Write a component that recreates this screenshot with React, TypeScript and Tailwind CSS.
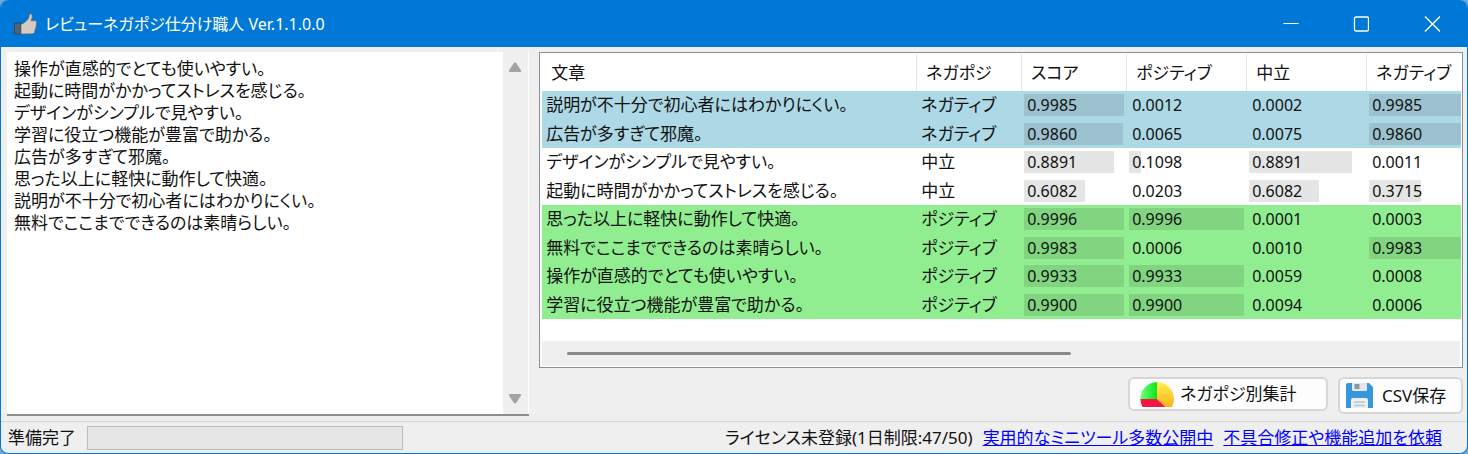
import { useState } from "react";

type Label = "ネガティブ" | "中立" | "ポジティブ";

interface Review {
    text: string;
    label: Label;
    scores: string[]; // score, positive, neutral, negative
}

const SOURCE = [
    "操作が直感的でとても使いやすい。",
    "起動に時間がかかってストレスを感じる。",
    "デザインがシンプルで見やすい。",
    "学習に役立つ機能が豊富で助かる。",
    "広告が多すぎて邪魔。",
    "思った以上に軽快に動作して快適。",
    "説明が不十分で初心者にはわかりにくい。",
    "無料でここまでできるのは素晴らしい。",
].join("\n");

const REVIEWS: Review[] = [
    { text: "説明が不十分で初心者にはわかりにくい。", label: "ネガティブ", scores: ["0.9985", "0.0012", "0.0002", "0.9985"] },
    { text: "広告が多すぎて邪魔。", label: "ネガティブ", scores: ["0.9860", "0.0065", "0.0075", "0.9860"] },
    { text: "デザインがシンプルで見やすい。", label: "中立", scores: ["0.8891", "0.1098", "0.8891", "0.0011"] },
    { text: "起動に時間がかかってストレスを感じる。", label: "中立", scores: ["0.6082", "0.0203", "0.6082", "0.3715"] },
    { text: "思った以上に軽快に動作して快適。", label: "ポジティブ", scores: ["0.9996", "0.9996", "0.0001", "0.0003"] },
    { text: "無料でここまでできるのは素晴らしい。", label: "ポジティブ", scores: ["0.9983", "0.0006", "0.0010", "0.9983"] },
    { text: "操作が直感的でとても使いやすい。", label: "ポジティブ", scores: ["0.9933", "0.9933", "0.0059", "0.0008"] },
    { text: "学習に役立つ機能が豊富で助かる。", label: "ポジティブ", scores: ["0.9900", "0.9900", "0.0094", "0.0006"] },
];

const COLUMNS = ["文章", "ネガポジ", "スコア", "ポジティブ", "中立", "ネガティブ"];

const ROW_COLORS: Record<Label, string> = {
    "ネガティブ": "bg-[#add8e6]",
    "中立": "bg-white",
    "ポジティブ": "bg-[#90ee90]",
};

// scores below this get no bar
const MIN_BAR = 0.05;

function ThumbIcon() {
    return (
        <svg viewBox="0 0 24 24" className="h-6 w-6" aria-hidden="true">
            <path d="M1.500 11h6.500v11H1.500z" fill="#4b637c" stroke="#3b3f46" strokeWidth="0.8" />
            <path
                d="M8 12.500c3.500-1.500 6.500-4 7.800-6.800l.7-3.700c1.600-.6 2.800.5 2.700 2.400-.1 1.700-.6 3.100-1.200 4.300l4.400.1c1.300.2 1.600 1.500.8 2.300.7.7.6 1.900-.3 2.500.5.9.3 1.900-.5 2.400.4 1 .1 1.900-.7 2.300.3 1.700-.4 3.300-1.800 3.400-4.200.4-8.300.2-11.900.2z"
                fill="#d6cbc1"
                stroke="#6f6962"
                strokeWidth="0.7"
            />
        </svg>
    );
}

function PieIcon() {
    return (
        <svg viewBox="0 0 34 25" className="h-[25px] w-[34px]" aria-hidden="true">
            <defs>
                <linearGradient id="pieGreen" x1="0" x2="1">
                    <stop offset="0" stopColor="#6dff7c" />
                    <stop offset="1" stopColor="#0be51c" />
                </linearGradient>
                <linearGradient id="pieYellow" x1="0" y1="0" x2="0" y2="1">
                    <stop offset="0" stopColor="#fff04f" />
                    <stop offset="1" stopColor="#ffb21c" />
                </linearGradient>
            </defs>
            <path d="M17 17V0A17 17 0 0 0 .4 17z" fill="url(#pieGreen)" />
            <path d="M17 0v17l8.500 8h6.500A17 17 0 0 0 17 0z" fill="url(#pieYellow)" />
            <path d="M.4 17H17l8.500 8H2.500A17 17 0 0 1 .4 17z" fill="#f31640" />
        </svg>
    );
}

function FloppyIcon() {
    return (
        <svg viewBox="0 0 28 25" className="h-[25px] w-[28px]" aria-hidden="true">
            <path d="M2 0h21l4 4v21H0V2a2 2 0 0 1 2-2z" fill="#3498db" />
            <path d="M6 0h15v6.500a1.500 1.500 0 0 1-1.500 1.500h-12A1.500 1.500 0 0 1 6 6.500z" fill="#e4e8ea" />
            <path d="M8.500 1h5v5h-5z" fill="#8b9798" />
            <path d="M5 25v-8a2 2 0 0 1 2-2h13a2 2 0 0 1 2 2v8z" fill="#ecf0f1" />
            <path d="M8 19h11M8 22.500h11" stroke="#bcc3c7" strokeWidth="1.300" />
        </svg>
    );
}

function TitleBar() {
    return (
        <header className="flex h-[47px] shrink-0 items-center bg-[#0078d7] pl-3 text-white">
            <ThumbIcon />
            <h1 className="flex-1 pl-2 text-base leading-6">レビューネガポジ仕分け職人 Ver.1.1.0.0</h1>
            <button aria-label="最小化" className="flex h-full w-[70px] items-center justify-center">
                <svg viewBox="0 0 16 16" className="h-4 w-4" stroke="currentColor">
                    <path d="M.5 7.500h15" />
                </svg>
            </button>
            <button aria-label="最大化" className="flex h-full w-[70px] items-center justify-center">
                <svg viewBox="0 0 16 16" className="h-4 w-4" fill="none" stroke="currentColor" strokeWidth="1.300">
                    <rect x="1.500" y="1" width="14" height="14" rx="1.500" />
                </svg>
            </button>
            <button aria-label="閉じる" className="flex h-full w-[71px] items-center justify-center">
                <svg viewBox="0 0 16 16" className="h-4 w-4" stroke="currentColor" strokeWidth="1.300">
                    <path d="M1 .5l15 15M16 .5l-15 15" />
                </svg>
            </button>
        </header>
    );
}

function ScoreCell({ value }: { value: string }) {
    const score = Number(value);

    return (
        <td className="p-0">
            <div className="grid h-[22px] items-center pl-0.5">
                {score >= MIN_BAR && (
                    <div className="col-start-1 row-start-1 h-[22px] bg-black/10" style={{ width: `${Math.floor(score * 98)}%` }} />
                )}
                <span className="col-start-1 row-start-1 pl-[3px] text-base leading-[22px]">{value}</span>
            </div>
        </td>
    );
}

function ResultTable() {
    return (
        <div className="overflow-hidden border border-[#8a8e97] bg-white p-px">
            <div className="overflow-hidden px-px">
                <table className="h-[265px] w-[972px] table-fixed border-separate border-spacing-0 text-left whitespace-nowrap">
                    <colgroup>
                        <col className="w-[375px]" />
                        <col className="w-[105px]" />
                        <col className="w-[105px]" />
                        <col className="w-[120px]" />
                        <col className="w-[120px]" />
                        <col className="w-[147px]" />
                    </colgroup>
                    <thead>
                        <tr className="h-[37px]">
                            {COLUMNS.map((name) => (
                                <th key={name} scope="col" className="border-r border-[#e5e5e5] p-0 pl-[9px] font-normal">
                                    {name}
                                </th>
                            ))}
                        </tr>
                    </thead>
                    <tbody>
                        {REVIEWS.map((review) => (
                            <tr key={review.text} className={ROW_COLORS[review.label]}>
                                <td className="p-0 pl-1">{review.text}</td>
                                <td className="p-0 pl-1">{review.label}</td>
                                {review.scores.map((value, i) => (
                                    <ScoreCell key={i} value={value} />
                                ))}
                            </tr>
                        ))}
                    </tbody>
                </table>
            </div>
            {/* Horizontal scrollbar */}
            <div className="mx-px mt-[22px] flex h-[25px] items-center bg-[#efefef] px-[25px]">
                <div className="h-[3px] w-[58%] rounded-full bg-[#898989]" />
            </div>
        </div>
    );
}

export default function App() {
    const [source, setSource] = useState(SOURCE);

    return (
        <div className="min-h-screen bg-[#6fa9d8] font-['Noto_Sans','Noto_Sans_CJK_JP',sans-serif] text-[17px] leading-[22px] text-[#111] [font-feature-settings:'palt']">
            <div className="flex min-h-screen flex-col overflow-hidden rounded-lg border-x border-b border-[#0078d7] bg-[#efefef]">
                <TitleBar />

                <main className="grid flex-1 grid-cols-[13fr_23fr] gap-2.5 px-1 pt-[5px] pb-[5px] pl-1.5">
                    {/* Input */}
                    <section className="flex min-w-0 border-b-2 border-[#8e8e8e] bg-white">
                        <textarea
                            aria-label="レビュー文章"
                            value={source}
                            onChange={(e) => setSource(e.target.value)}
                            className="min-w-0 flex-1 resize-none overflow-hidden px-[7px] py-1.5 leading-[22px] outline-none"
                        />
                        <div className="flex w-[26px] flex-col items-center justify-between border-r border-white bg-[#efefef] py-2.5">
                            <svg viewBox="0 0 14 10" className="h-2.5 w-3.5" fill="#a3a3a3">
                                <path d="M4.500 1.500Q6-.3 7.500 1.500L12 8.500Q12.500 10 11 10H1Q-.5 10 0 8.500z" />
                            </svg>
                            <svg viewBox="0 0 14 10" className="h-2.5 w-3.5" fill="#a3a3a3">
                                <path d="M4.500 8.500Q6 10.300 7.500 8.500L12 1.500Q12.500 0 11 0H1Q-.5 0 0 1.500z" />
                            </svg>
                        </div>
                    </section>

                    {/* Results */}
                    <section className="min-w-0">
                        <ResultTable />
                        <div className="mt-[9px] flex items-start justify-end gap-2.5">
                            <button className="flex h-[34px] w-[200px] items-center gap-1.5 rounded-md border-2 border-[#d6d6d6] bg-[#fdfdfd] pl-2.5">
                                <PieIcon />
                                ネガポジ別集計
                            </button>
                            <button className="flex h-[37px] w-[125px] items-center gap-2 rounded-md border-2 border-[#d6d6d6] bg-[#fdfdfd] pl-1.5">
                                <FloppyIcon />
                                CSV保存
                            </button>
                        </div>
                    </section>
                </main>

                {/* Status bar */}
                <footer className="flex h-8 shrink-0 items-center border-t border-[#d7d7d7] pr-[25px] pl-[7px]">
                    <label htmlFor="progress">準備完了</label>
                    <progress
                        id="progress"
                        value={0}
                        max={100}
                        className="ml-[11px] h-6 w-[316px] appearance-none border border-[#bcbcbc] bg-[#e6e6e6] [&::-webkit-progress-bar]:bg-[#e6e6e6]"
                    />
                    <span className="ml-auto">ライセンス未登録(1日制限:47/50)</span>
                    <a href="#tools" className="ml-2.5 text-[#0000ff] underline">実用的なミニツール多数公開中</a>
                    <a href="#request" className="ml-2.5 text-[#0000ff] underline">不具合修正や機能追加を依頼</a>
                </footer>
            </div>
        </div>
    );
}
